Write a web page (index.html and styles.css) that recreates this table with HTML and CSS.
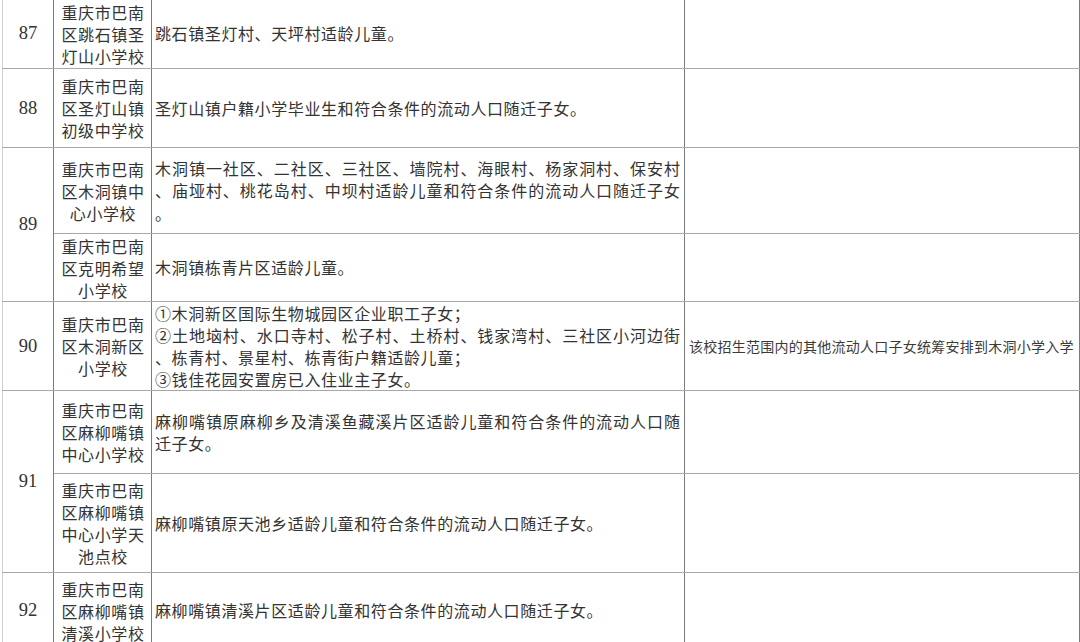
FILE: index.html
```html
<!DOCTYPE html>
<html lang="zh-CN">
<head>
<meta charset="utf-8">
<title>招生范围</title>
<link rel="stylesheet" href="styles.css">
</head>
<body>
<div class="sheet">
<table class="grid">
  <colgroup>
    <col class="c-no">
    <col class="c-school">
    <col class="c-area">
    <col class="c-note">
  </colgroup>
  <tbody>
    <tr class="h70">
      <td class="no">87</td>
      <td class="school">重庆市巴南区跳石镇圣灯山小学校</td>
      <td class="area">跳石镇圣灯村、天坪村适龄儿童。</td>
      <td class="note"></td>
    </tr>
    <tr class="h79">
      <td class="no">88</td>
      <td class="school">重庆市巴南区圣灯山镇初级中学校</td>
      <td class="area">圣灯山镇户籍小学毕业生和符合条件的流动人口随迁子女。</td>
      <td class="note"></td>
    </tr>
    <tr class="h86">
      <td class="no" rowspan="2">89</td>
      <td class="school">重庆市巴南区木洞镇中心小学校</td>
      <td class="area"><span class="ln full">木洞镇一社区、二社区、三社区、墙院村、海眼村、杨家洞村、保安村</span><span class="ln full">、庙垭村、桃花岛村、中坝村适龄儿童和符合条件的流动人口随迁子女</span><span class="ln">。</span></td>
      <td class="note"></td>
    </tr>
    <tr class="h68">
      <td class="school">重庆市巴南区克明希望小学校</td>
      <td class="area">木洞镇栋青片区适龄儿童。</td>
      <td class="note"></td>
    </tr>
    <tr class="h89">
      <td class="no">90</td>
      <td class="school">重庆市巴南区木洞新区小学校</td>
      <td class="area tight"><span class="ln">①木洞新区国际生物城园区企业职工子女；</span><span class="ln full">②土地垴村、水口寺村、松子村、土桥村、钱家湾村、三社区小河边街</span><span class="ln">、栋青村、景星村、栋青街户籍适龄儿童；</span><span class="ln">③钱佳花园安置房已入住业主子女。</span></td>
      <td class="note">该校招生范围内的其他流动人口子女统筹安排到木洞小学入学</td>
    </tr>
    <tr class="h83">
      <td class="no" rowspan="2">91</td>
      <td class="school">重庆市巴南区麻柳嘴镇中心小学校</td>
      <td class="area"><span class="ln full">麻柳嘴镇原麻柳乡及清溪鱼藏溪片区适龄儿童和符合条件的流动人口随</span><span class="ln">迁子女。</span></td>
      <td class="note"></td>
    </tr>
    <tr class="h99">
      <td class="school">重庆市巴南区麻柳嘴镇中心小学天池点校</td>
      <td class="area">麻柳嘴镇原天池乡适龄儿童和符合条件的流动人口随迁子女。</td>
      <td class="note"></td>
    </tr>
    <tr class="h76">
      <td class="no">92</td>
      <td class="school">重庆市巴南区麻柳嘴镇清溪小学校</td>
      <td class="area">麻柳嘴镇清溪片区适龄儿童和符合条件的流动人口随迁子女。</td>
      <td class="note"></td>
    </tr>
  </tbody>
</table>
</div>
</body>
</html>
```
FILE: styles.css
```css
html, body {
  margin: 0;
  padding: 0;
  background: #ffffff;
  overflow: hidden;
}

.sheet {
  width: 1080px;
  height: 642px;
  overflow: hidden;
  padding-left: 2px;
  box-sizing: border-box;
}

.grid {
  margin-top: -2px;
  border-collapse: collapse;
  table-layout: fixed;
  width: 1077px;
  color: #333333;
  font-family: "Noto Sans CJK SC", "Noto Sans", sans-serif;
}

.c-no { width: 51px; }
.c-school { width: 98px; }
.c-area { width: 533px; }
.c-note { width: 395px; }

.grid td {
  border-top: 1px solid #a8a8a8;
  border-bottom: 1px solid #a8a8a8;
  border-left: 1px solid #7a7a7a;
  border-right: 1px solid #7a7a7a;
  padding: 0;
  vertical-align: middle;
}

.grid td:first-child {
  border-left-color: #cfcfcf;
}

.h70 { height: 70px; }
.h79 { height: 79px; }
.h76 { height: 76px; }
.h86 { height: 86px; }
.h68 { height: 68px; }
.h89 { height: 89px; }
.h83 { height: 83px; }
.h99 { height: 99px; }

.no {
  text-align: center;
  font-family: "Liberation Serif", "Times New Roman", serif;
  font-size: 18.5px;
  color: #333333;
}

.school {
  text-align: center;
  font-size: 16px;
  line-height: 22px;
  letter-spacing: 0.6px;
  padding: 0 5px 0 6px !important;
  word-break: break-all;
}

.area {
  font-size: 16px;
  line-height: 22.5px;
  letter-spacing: 0.6px;
  padding: 0 3px 0 3px !important;
  text-align: left;
}

.area.tight {
  line-height: 22px;
}

.ln {
  display: block;
  white-space: nowrap;
}

.ln.full {
  text-align: justify;
  text-align-last: justify;
  letter-spacing: 0;
  margin-right: 1px;
}

.note {
  font-size: 14px;
  line-height: 20px;
  letter-spacing: 0.25px;
  white-space: nowrap;
  padding: 0 0 0 4px !important;
  color: #3a3a3a;
}
```
